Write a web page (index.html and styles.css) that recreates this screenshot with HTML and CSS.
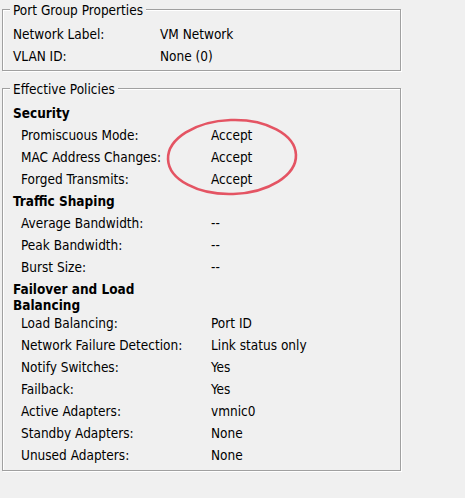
FILE: index.html
```html
<!DOCTYPE html>
<html>
<head>
<meta charset="utf-8">
<link rel="stylesheet" href="styles.css">
</head>
<body>
<div class="page">
  <fieldset class="group group-top">
    <legend>Port Group Properties</legend>
    <div class="rows">
      <div class="row"><span class="label">Network Label:</span><span class="value">VM Network</span></div>
      <div class="row"><span class="label">VLAN ID:</span><span class="value">None (0)</span></div>
    </div>
  </fieldset>

  <fieldset class="group group-policies">
    <legend>Effective Policies</legend>
    <div class="rows">
      <div class="head">Security</div>
      <div class="row sub"><span class="label">Promiscuous Mode:</span><span class="value">Accept</span></div>
      <div class="row sub"><span class="label">MAC Address Changes:</span><span class="value">Accept</span></div>
      <div class="row sub"><span class="label">Forged Transmits:</span><span class="value">Accept</span></div>
      <div class="head">Traffic Shaping</div>
      <div class="row sub"><span class="label">Average Bandwidth:</span><span class="value">--</span></div>
      <div class="row sub"><span class="label">Peak Bandwidth:</span><span class="value">--</span></div>
      <div class="row sub"><span class="label">Burst Size:</span><span class="value">--</span></div>
      <div class="head wrap">Failover and Load Balancing</div>
      <div class="row sub"><span class="label">Load Balancing:</span><span class="value">Port ID</span></div>
      <div class="row sub"><span class="label">Network Failure Detection:</span><span class="value">Link status only</span></div>
      <div class="row sub"><span class="label">Notify Switches:</span><span class="value">Yes</span></div>
      <div class="row sub"><span class="label">Failback:</span><span class="value">Yes</span></div>
      <div class="row sub"><span class="label">Active Adapters:</span><span class="value">vmnic0</span></div>
      <div class="row sub"><span class="label">Standby Adapters:</span><span class="value">None</span></div>
      <div class="row sub"><span class="label">Unused Adapters:</span><span class="value">None</span></div>
    </div>
  </fieldset>

  <svg class="mark" width="136" height="82" viewBox="0 0 136 82" aria-hidden="true">
    <ellipse cx="67" cy="40" rx="64" ry="37" fill="none" stroke="#e2384a" stroke-width="2.6" stroke-opacity="0.85" transform="rotate(-2 67 40)"/>
  </svg>
</div>
</body>
</html>
```

FILE: styles.css
```css
html, body {
  margin: 0;
  padding: 0;
  background: #f0f0f0;
}

.page {
  position: relative;
  width: 465px;
  height: 498px;
  font-family: "DejaVu Sans Condensed", "DejaVu Sans", sans-serif;
  font-stretch: condensed;
  font-size: 13.5px;
  color: #000;
}

.group {
  box-sizing: border-box;
  width: 399px;
  margin: 0 0 0 2px;
  padding: 0 0 3px 10px;
  border: 1px solid #a0a0a0;
  box-shadow: inset 1px 1px 0 #fff, 1px 1px 0 #fff;
  min-width: 0;
}

.group legend {
  line-height: 18px;
  padding: 1px 3px 0;
  margin-left: -3px;
  background: #f0f0f0;
}

.group-policies {
  margin-top: 8px;
  padding-bottom: 4px;
}

.rows {
  display: flex;
  flex-direction: column;
  padding-top: 4px;
}

.row {
  display: grid;
  grid-template-columns: 147px 1fr;
  line-height: 22px;
  white-space: nowrap;
}

.row.sub {
  grid-template-columns: 190px 1fr;
  padding-left: 8px;
}

.head {
  font-weight: bold;
  line-height: 22px;
}

.head.wrap {
  width: 135px;
  line-height: 16px;
  padding-top: 3px;
  padding-bottom: 0;
  margin-bottom: -1px;
}

.mark {
  position: absolute;
  left: 165px;
  top: 117px;
}
```
